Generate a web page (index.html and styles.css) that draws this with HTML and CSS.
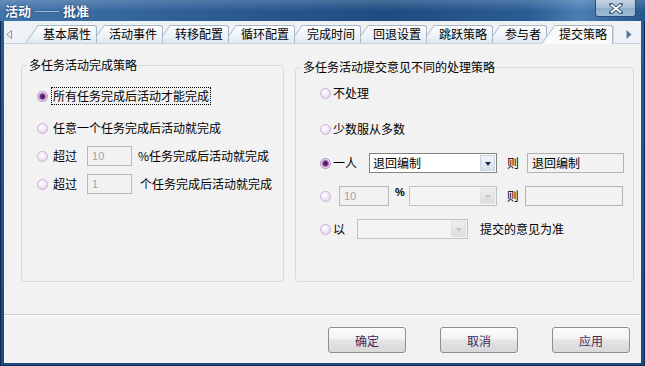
FILE: index.html
```html
<!DOCTYPE html>
<html lang="zh-CN">
<head>
	<meta charset="UTF-8">
	<title>活动 —— 批准</title>
	<link rel="stylesheet" href="styles.css">
</head>
<body>
	<div class="window">
		<div class="titlebar">
			<span class="title">活动 —— 批准</span>
			<span class="close">
				<svg width="14" height="11" viewBox="0 0 14 11"><path d="M2 1.5 L12 9.5 M12 1.5 L2 9.5" stroke="#34506e" stroke-width="3.6" stroke-linecap="round"/><path d="M2 1.5 L12 9.5 M12 1.5 L2 9.5" stroke="#fff" stroke-width="2"/></svg>
			</span>
		</div>
		<div class="client">
			<div class="tabstrip">
				<span class="scroll scroll-left">
					<svg width="6" height="9" viewBox="0 0 6 9"><path d="M5.5 0.5 L0.8 4.5 L5.5 8.5 Z" fill="none" stroke="#8a96a4"/></svg>
				</span>
				<div class="tabs">
					<span class="tab">基本属性</span>
					<span class="tab">活动事件</span>
					<span class="tab">转移配置</span>
					<span class="tab">循环配置</span>
					<span class="tab">完成时间</span>
					<span class="tab">回退设置</span>
					<span class="tab">跳跃策略</span>
					<span class="tab">参与者</span>
					<span class="tab active">提交策略</span>
				</div>
				<span class="scroll scroll-right">
					<svg width="6" height="9" viewBox="0 0 6 9"><path d="M0.5 0 L5.5 4.5 L0.5 9 Z" fill="#57779c"/></svg>
				</span>
			</div>

			<div class="panel">
				<fieldset class="group group-left">
					<legend>多任务活动完成策略</legend>
					<div class="opts">
						<div class="row first">
							<span class="radio on"></span><span class="label focus">所有任务完成后活动才能完成</span>
						</div>
						<div class="row">
							<span class="radio"></span><span class="label">任意一个任务完成后活动就完成</span>
						</div>
						<div class="row">
							<span class="radio"></span><span class="label">超过</span>
							<span class="box num">10</span>
							<span class="label after">%任务完成后活动就完成</span>
						</div>
						<div class="row">
							<span class="radio"></span><span class="label">超过</span>
							<span class="box num">1</span>
							<span class="label after wide">个任务完成后活动就完成</span>
						</div>
					</div>
				</fieldset>

				<fieldset class="group group-right">
					<legend>多任务活动提交意见不同的处理策略</legend>
					<div class="opts">
						<div class="row first">
							<span class="radio"></span><span class="label">不处理</span>
						</div>
						<div class="row second">
							<span class="radio"></span><span class="label">少数服从多数</span>
						</div>
						<div class="row">
							<span class="radio on"></span><span class="label">一人</span>
							<span class="select sel-one"><span class="value">退回编制</span><span class="drop"></span></span>
							<span class="label then">则</span>
							<span class="box ro text-one">退回编制</span>
						</div>
						<div class="row">
							<span class="radio"></span>
							<span class="box num pct">10</span>
							<span class="label percent">%</span>
							<span class="select off sel-pct"><span class="value"></span><span class="drop"></span></span>
							<span class="label then">则</span>
							<span class="box ro text-pct"></span>
						</div>
						<div class="row">
							<span class="radio"></span><span class="label">以</span>
							<span class="select off sel-by"><span class="value"></span><span class="drop"></span></span>
							<span class="label tail">提交的意见为准</span>
						</div>
					</div>
				</fieldset>
			</div>

			<div class="footer">
				<button class="btn">确定</button>
				<button class="btn">取消</button>
				<button class="btn">应用</button>
			</div>
		</div>
	</div>
</body>
</html>
```

FILE: styles.css
```css
*{
	margin:0;
	padding:0;
}
body{
	font-family: "Noto Sans CJK SC", "Liberation Sans", sans-serif;
	font-size: 12px;
	line-height: 16px;
	color:#000;
	background:#fff;
}
.window{
	width:645px;
	height:366px;
	box-sizing:border-box;
	display:flex;
	flex-direction:column;
	border:1px solid #0d2a4e;
	border-top:none;
	padding:0 3px 2px;
	background:linear-gradient(180deg,#2a5d96,#1c4a80);
}

/* title bar */
.titlebar{
	height:21px;
	margin:0 -4px;
	display:flex;
	align-items:flex-start;
	justify-content:space-between;
	background:
		linear-gradient(180deg,rgba(255,255,255,.18),rgba(255,255,255,0) 55%),
		linear-gradient(90deg,#4275ab 0%,#2d5e96 30%,#1e4b82 60%,#2a5d95 82%,#4a7eb4 90%,#24558d 100%);
}
.title{
	margin:2px 0 0 5px;
	font-size:13px;
	font-weight:bold;
	line-height:17px;
	color:#f4f8fc;
	text-shadow:0 0 2px #0b2246;
}
.close{
	width:41px;
	height:17px;
	box-sizing:border-box;
	margin-right:9px;
	display:flex;
	align-items:center;
	justify-content:center;
	border:1px solid #2b4e78;
	border-top:none;
	border-radius:0 0 3px 3px;
	background:linear-gradient(180deg,#c2d4e4,#a5bfd6 50%,#8daecb 51%,#9ebcd6);
}

.client{
	flex:1;
	display:flex;
	flex-direction:column;
	background:#f2f2f2;
}

/* tabs */
.tabstrip{
	height:23px;
	box-sizing:border-box;
	display:flex;
	align-items:flex-end;
	background:#eef1f5;
	border-bottom:1px solid #c9d3dd;
}
.scroll{
	display:flex;
	align-items:center;
	justify-content:center;
	height:18px;
	align-self:flex-end;
}
.scroll-left{
	width:21px;
	justify-content:flex-start;
	padding-left:2px;
	box-sizing:border-box;
}
.scroll-right{
	margin-left:auto;
	width:28px;
	box-sizing:border-box;
	border-left:1px solid #d3dde7;
	padding-left:3px;
}
.tabs{
	display:flex;
	align-items:flex-end;
}
.tab{
	position:relative;
	height:18px;
	line-height:18px;
	padding:0 6px 0 18px;
	margin-left:-6px;
	white-space:nowrap;
}
.tab:first-child{
	margin-left:0;
}
.tab::before,
.tab::after{
	content:"";
	position:absolute;
	top:0;
	bottom:0;
	z-index:-1;
	box-sizing:border-box;
	background:linear-gradient(180deg,#fdfefe,#edf2f6 60%,#dfe7ee);
	border-top:1px solid #a8b8c9;
}
.tab::before{
	left:0;
	width:22px;
	border-left:1px solid #a8b8c9;
	transform:skewX(-36deg);
	transform-origin:0 100%;
}
.tab::after{
	left:13px;
	right:0;
	border-right:1px solid #a8b8c9;
	border-radius:0 3px 0 0;
}
.tab:nth-child(1){ z-index:9; }
.tab:nth-child(2){ z-index:8; }
.tab:nth-child(3){ z-index:7; }
.tab:nth-child(4){ z-index:6; }
.tab:nth-child(5){ z-index:5; }
.tab:nth-child(6){ z-index:4; }
.tab:nth-child(7){ z-index:3; }
.tab:nth-child(8){ z-index:2; }
.tab.active{
	z-index:10;
	height:19px;
	margin-bottom:-1px;
}
.tab.active::before,
.tab.active::after{
	background:#fafafa;
}

/* panel and groups */
.panel{
	height:270px;
	box-sizing:border-box;
	display:flex;
	gap:11px;
	padding:13px 7px 0 17px;
}
.group{
	border:1px solid #d3dbe2;
	border-radius:4px;
	box-sizing:border-box;
	min-width:0;
}
.group legend{
	margin-left:5px;
	padding:0 2px;
	line-height:16px;
}
.group-left{
	width:263px;
	height:225px;
}
.group-right{
	width:339px;
	height:223px;
	margin-top:2px;
}
.opts{
	display:flex;
	flex-direction:column;
}
.group-left .opts{
	padding:13px 0 0 15px;
	gap:8px;
}
.group-left .row.first{
	margin-bottom:4px;
}
.group-right .opts{
	padding:8px 0 0 24px;
	gap:13px;
}
.group-right .row.first{
	margin-bottom:3px;
}
.group-right .row.second{
	margin-bottom:1px;
}
.row{
	height:20px;
	display:flex;
	align-items:center;
	white-space:nowrap;
}
.radio{
	flex:none;
	width:11px;
	height:11px;
	box-sizing:border-box;
	border-radius:50%;
	border:1px solid #cdb2d9;
	background:radial-gradient(circle at 40% 35%,#fff 0,#f3e9f6 45%,#dcc4e6 100%);
	margin-right:5px;
}
.group-right .radio{
	margin-right:2px;
}
.radio.on{
	border-color:#b28fc2;
	background:radial-gradient(circle,#3a0c4a 0,#7d3893 2.6px,#c49fd3 3.4px,#f1e6f5 4.3px);
}
.label.focus{
	outline:1px dotted #000;
	outline-offset:0;
	padding:0 1px;
	margin-left:-1px;
}
.box{
	height:20px;
	box-sizing:border-box;
	display:flex;
	align-items:center;
	border:1px solid #b9b9b9;
	background:#f2f2f2;
	padding-left:4px;
}
.box.num{
	width:45px;
	margin-left:10px;
	font-family:"Liberation Sans", sans-serif;
	font-size:11px;
	color:#a3a3a3;
}
.label.after{
	margin-left:6px;
}
.label.after.wide{
	margin-left:8px;
}
.box.ro{
	border-color:#b3b3b3;
}
.text-one{
	width:97px;
	margin-left:8px;
}
.text-pct{
	width:98px;
	margin-left:6px;
}
.box.pct{
	width:50px;
	margin-left:6px;
}
.label.percent{
	align-self:flex-start;
	margin:-2px 0 0 6px;
	font-family:"Liberation Sans", sans-serif;
	font-weight:bold;
	font-size:11px;
}
.label.then{
	margin-left:10px;
}
.label.tail{
	margin-left:12px;
}
.select{
	height:20px;
	box-sizing:border-box;
	display:flex;
	align-items:stretch;
	border:1px solid #828282;
	background:#fff;
	padding:1px;
}
.select .value{
	flex:1;
	line-height:16px;
	padding-left:2px;
}
.select .drop{
	width:15px;
	position:relative;
	background:linear-gradient(180deg,#f1f4f8,#d9e1ea);
	border:1px solid #c8d2dc;
	box-sizing:border-box;
}
.select .drop::after{
	content:"";
	position:absolute;
	left:4px;
	top:6px;
	border-left:3px solid transparent;
	border-right:3px solid transparent;
	border-top:4px solid #1d2d57;
}
.select.off{
	border-color:#c2c2c2;
	background:#f4f4f4;
}
.select.off .drop{
	background:linear-gradient(180deg,#eeeeee,#dddddd);
	border-color:#e2e2e2;
}
.select.off .drop::after{
	border-top-color:#c8c8c8;
}
.sel-one{
	width:128px;
	margin-left:12px;
}
.sel-pct{
	width:88px;
	margin-left:4px;
}
.sel-by{
	width:111px;
	margin-left:12px;
}

/* footer */
.footer{
	flex:1;
	border-top:1px solid #c4ccd4;
	box-shadow:inset 0 1px #fff;
	display:flex;
	justify-content:flex-end;
	align-items:flex-start;
	gap:34px;
	padding:12px 11px 0 0;
}
.btn{
	width:78px;
	height:26px;
	border:1px solid #8e8e8e;
	border-radius:3px;
	background:linear-gradient(180deg,#fdfdfd,#f2f2f2 45%,#e4e4e4 50%,#d8d8d8);
	font-family:"Noto Sans CJK SC", sans-serif;
	font-size:12px;
	color:#43275e;
}
```
